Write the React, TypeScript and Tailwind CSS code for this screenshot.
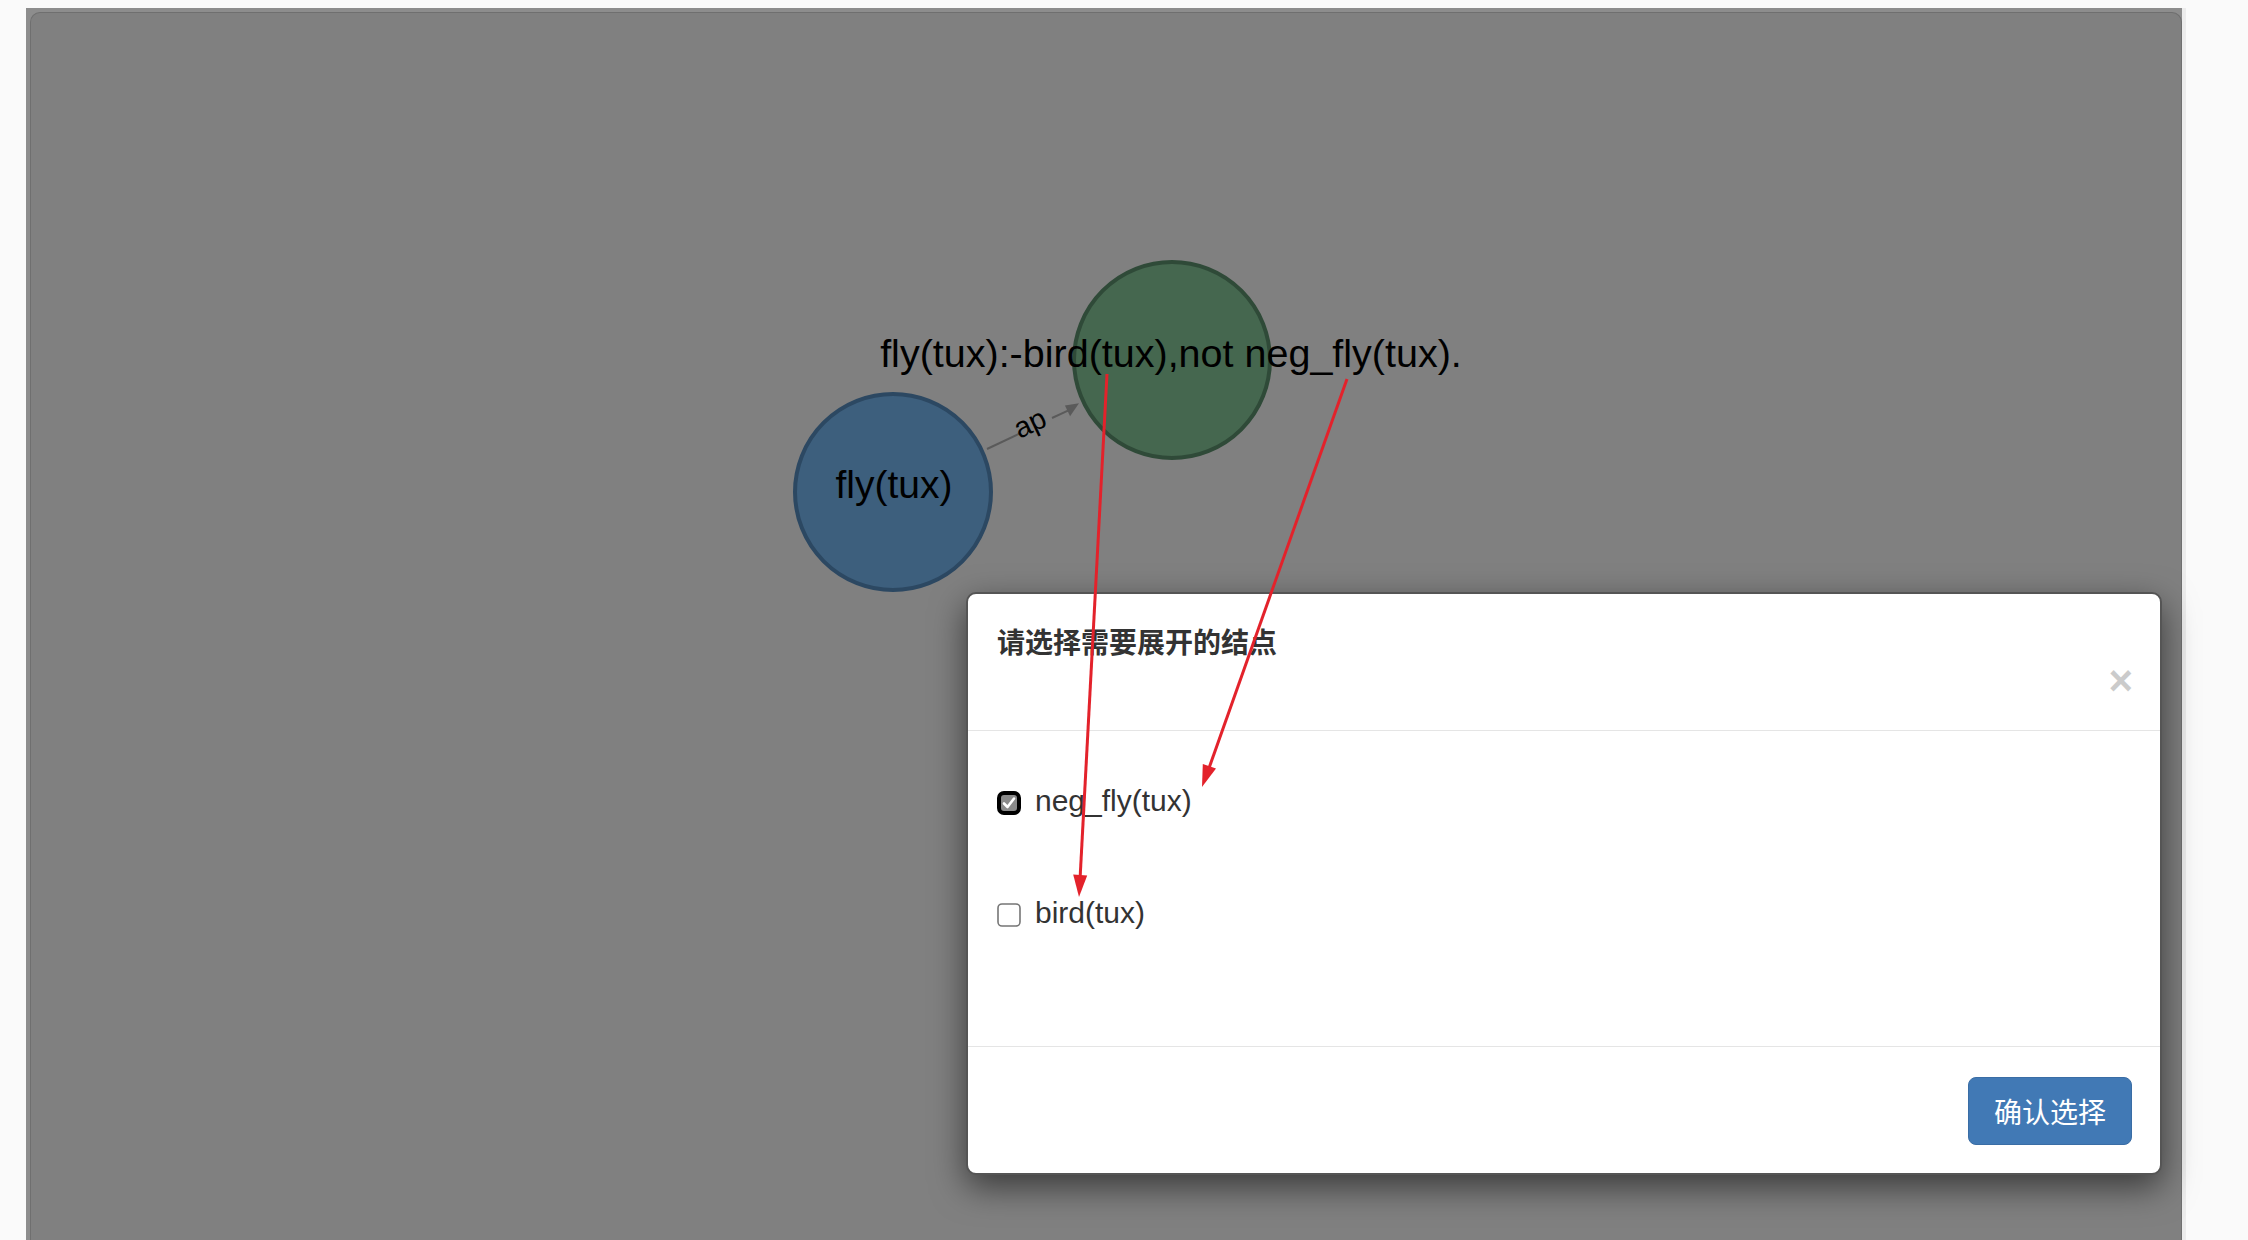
import React from "react";

function CheckedBox() {
  return (
    <svg width="24" height="24" viewBox="0 0 24 24" className="shrink-0">
      <rect x="2" y="2" width="20" height="20" rx="5" fill="#8a8a8a" stroke="#000" strokeWidth="4" />
      <path d="M7 12.5 L10.5 16 L17 7.5" fill="none" stroke="#fff" strokeWidth="2.6" strokeLinecap="round" strokeLinejoin="round" />
    </svg>
  );
}

function EmptyBox() {
  return (
    <svg width="24" height="24" viewBox="0 0 24 24" className="shrink-0">
      <rect x="1" y="1" width="22" height="22" rx="4" fill="#fff" stroke="#767676" strokeWidth="1.6" />
    </svg>
  );
}

export default function App() {
  return (
    <div className="w-[2248px] h-[1240px] bg-[#fafafa] relative overflow-hidden font-['Liberation_Sans','Noto_Sans_CJK_SC',sans-serif]">
      <div className="flex h-full pl-[26px] pt-[8px]">
        <div className="w-[2156px] flex flex-col bg-[#8d8d8d] pt-[4px] pl-[4px]">
          <div className="relative flex-1 bg-[#808080] border-t border-l border-r border-[#6f6f6f] rounded-t-[10px]">
            <svg className="absolute inset-0 w-full h-full">
              <g transform="translate(-31,-13)">
                {/* edge */}
                <line x1="987" y1="449" x2="1018.6" y2="434" stroke="#5a5a5a" strokeWidth="2" />
                <line x1="1052" y1="418" x2="1068" y2="410.7" stroke="#5a5a5a" strokeWidth="2" />
                <polygon points="1079,403.3 1070.1,416.3 1064.9,405.5" fill="#5a5a5a" />
                <text
                  x="0"
                  y="0"
                  transform="translate(1034,432) rotate(-25.3)"
                  textAnchor="middle"
                  fontSize="29"
                  fill="#000"
                  fontFamily="Liberation Sans, sans-serif"
                >
                  ap
                </text>
                {/* nodes */}
                <circle cx="893" cy="492" r="98" fill="#3d5f7d" stroke="#2c4862" strokeWidth="4" />
                <circle cx="1172" cy="360" r="98" fill="#45674f" stroke="#2f4a38" strokeWidth="4" />
                <text x="894" y="498" textAnchor="middle" fontSize="39" fill="#000" fontFamily="Liberation Sans, sans-serif">
                  fly(tux)
                </text>
                <text x="1171" y="367" textAnchor="middle" fontSize="39.5" fill="#000" fontFamily="Liberation Sans, sans-serif">
                  fly(tux):-bird(tux),not neg_fly(tux).
                </text>
              </g>
            </svg>
          </div>
        </div>
        <div className="w-[4px] bg-[#ececec]" />
      </div>

      {/* modal */}
      <div className="absolute left-[966px] top-[592px] w-[1196px] bg-white border-2 border-[#555] rounded-[10px] shadow-[0_12px_34px_rgba(0,0,0,0.55)] flex flex-col">
        <div className="flex flex-col px-[29px] pt-[27px] pb-[29px] border-b border-[#e5e5e5]">
          <div className="h-[40px] leading-[40px] text-[28px] font-semibold text-[#333] font-['Noto_Sans_CJK_SC',sans-serif]">
            请选择需要展开的结点
          </div>
          <div className="h-[40px] flex justify-end items-center">
            <span className="text-[42px] leading-none font-bold text-black opacity-20 mr-[-2px] font-['Liberation_Sans',sans-serif]">×</span>
          </div>
        </div>
        <div className="flex flex-col px-[29px] pt-[50px] pb-[110px] gap-[69px]">
          <label className="h-[43px] flex items-center gap-[14px]">
            <CheckedBox />
            <span className="text-[30px] text-[#333] mb-[5px]">neg_fly(tux)</span>
          </label>
          <label className="h-[43px] flex items-center gap-[14px]">
            <EmptyBox />
            <span className="text-[30px] text-[#333] mb-[5px]">bird(tux)</span>
          </label>
        </div>
        <div className="flex justify-end border-t border-[#e5e5e5] px-[28px] pt-[30px] pb-[28px]">
          <button className="w-[164px] h-[68px] rounded-[8px] bg-[#4179b5] border border-[#3a6da5] text-white text-[28px] font-['Noto_Sans_CJK_SC',sans-serif] flex items-center justify-center">
            确认选择
          </button>
        </div>
      </div>

      {/* red annotation arrows */}
      <svg className="absolute inset-0 w-full h-full pointer-events-none">
        <line x1="1107" y1="374" x2="1080.2" y2="876" stroke="#e3222b" strokeWidth="3" />
        <polygon points="1079,897 1087.2,875.4 1073.2,874.6" fill="#e3222b" />
        <line x1="1347" y1="379" x2="1209.4" y2="767" stroke="#e3222b" strokeWidth="3" />
        <polygon points="1202,787 1216,768.6 1202.8,764" fill="#e3222b" />
      </svg>
    </div>
  );
}
